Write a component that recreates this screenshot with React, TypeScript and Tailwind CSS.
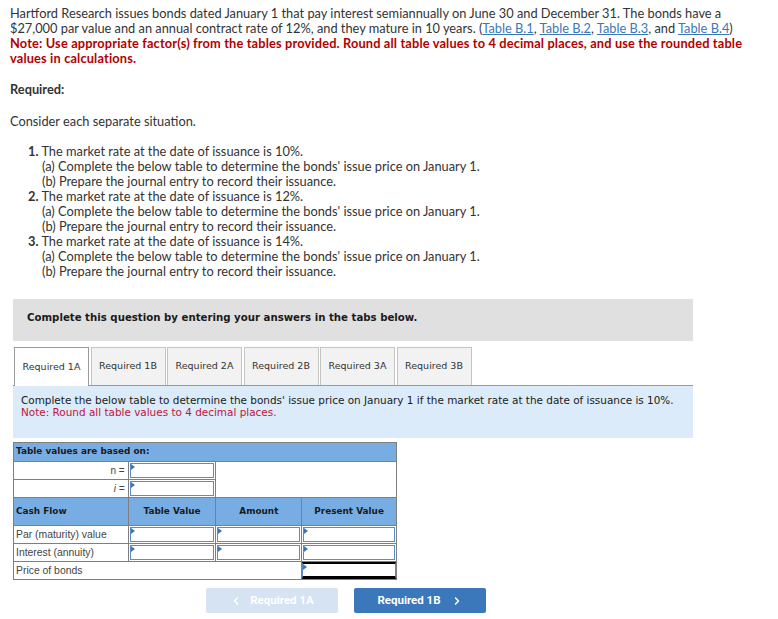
import React from 'react';
import { ChevronLeft, ChevronRight } from 'lucide-react';

const situations = ['10%', '12%', '14%'];
const tabs = ['Required 1A', 'Required 1B', 'Required 2A', 'Required 2B', 'Required 3A', 'Required 3B'];

const Field = ({ thick = false }: { thick?: boolean }) => (
  <div
    className={`relative h-full bg-white border border-[#5a8ccb] ${thick ? 'border-t-2 border-b-[3px] border-t-black border-b-black' : ''}`}
  >
    <span className="absolute left-0 top-0 w-0 h-0 border-t-[3px] border-b-[3px] border-l-[4px] border-t-transparent border-b-transparent border-l-[#3a77bb]" />
  </div>
);

const label = { fontFamily: '"Liberation Sans", Arial, sans-serif' };

const App = () => {
  return (
    <div className="w-[778px] h-[619px] bg-white overflow-hidden text-[#333]" style={{ fontFamily: 'Lato, "Open Sans", sans-serif' }}>
      <div className="pl-[10px] pt-[6px] text-[12.8px] leading-[15px] whitespace-nowrap">
        <p>
          Hartford Research issues bonds dated January 1 that pay interest semiannually on June 30 and December 31. The bonds have a
          <br />
          $27,000 par value and an annual contract rate of 12%, and they mature in 10 years. (
          <a className="text-[#3a77bb] underline">Table B.1</a>, <a className="text-[#3a77bb] underline">Table B.2</a>,{' '}
          <a className="text-[#3a77bb] underline">Table B.3</a>, and <a className="text-[#3a77bb] underline">Table B.4</a>)
        </p>
        <p className="font-bold text-[#b30000] tracking-[0.15px]">
          Note: Use appropriate factor(s) from the tables provided. Round all table values to 4 decimal places, and use the rounded table
          <br />
          values in calculations.
        </p>
        <p className="font-bold mt-[16px]">Required:</p>
        <p className="mt-[17px]">Consider each separate situation.</p>
        <div className="mt-[15px] pl-[18px]">
          {situations.map((rate, i) => (
            <div key={rate}>
              <p>
                <span className="font-bold">{i + 1}.</span> The market rate at the date of issuance is {rate}.
              </p>
              <p className="pl-[14px]">(a) Complete the below table to determine the bonds&apos; issue price on January 1.</p>
              <p className="pl-[14px]">(b) Prepare the journal entry to record their issuance.</p>
            </div>
          ))}
        </div>
      </div>

      <div className="ml-[13px] w-[680px] mt-[20px]" style={{ fontFamily: '"DejaVu Sans", Verdana, sans-serif' }}>
        <div className="h-[42px] bg-[#e0e0e0] pl-[14px] pt-[11px] text-[10.2px] font-bold text-[#1a1a1a]">
          Complete this question by entering your answers in the tabs below.
        </div>

        <div className="mt-[6px] flex items-end gap-[1.5px] pl-px border-b border-[#999]">
          {tabs.map((tab, i) => (
            <div
              key={tab}
              className={`w-[75px] flex items-center justify-center text-[9.5px] border border-b-0 ${
                i === 0 ? 'bg-white border-[#999] -mb-px h-[39px]' : 'bg-[#f2f2f2] border-[#c4c4c4] h-[38px]'
              }`}
            >
              {tab}
            </div>
          ))}
        </div>

        <div className="h-[52px] bg-[#dbebf9] pl-[8px] pt-[8px] text-[10.45px] leading-[12px] text-[#1a1a1a]">
          <p>Complete the below table to determine the bonds&apos; issue price on January 1 if the market rate at the date of issuance is 10%.</p>
          <p className="text-[#c0143c]">Note: Round all table values to 4 decimal places.</p>
        </div>

        <table className="mt-[4px] border-collapse text-[8.9px] text-[#1a1a1a] w-[384px]">
          <colgroup>
            <col className="w-[115px]" />
            <col className="w-[88px]" />
            <col className="w-[86px]" />
            <col className="w-[95px]" />
          </colgroup>
          <tbody>
            <tr className="h-[19px]">
              <td colSpan={4} className="bg-[#78ade3] border border-[#7f7f7f] px-[2px] font-bold">Table values are based on:</td>
            </tr>
            <tr className="h-[18px]">
              <td className="border border-[#7f7f7f] text-right pr-[3px] text-[#444] text-[10px]" style={label}>n =</td>
              <td className="border border-[#7f7f7f] p-px h-[18px]"><Field /></td>
              <td colSpan={2} rowSpan={2} className="border border-[#7f7f7f] bg-white" />
            </tr>
            <tr className="h-[18px]">
              <td className="border border-[#7f7f7f] text-right pr-[3px] italic text-[#444] text-[10px]" style={label}>i =</td>
              <td className="border border-[#7f7f7f] p-px h-[18px]"><Field /></td>
            </tr>
            <tr className="h-[28px] bg-[#78ade3] font-bold">
              <td className="border border-[#7f7f7f] px-[2px]">Cash Flow</td>
              <td className="border border-[#7f7f7f] text-center">Table Value</td>
              <td className="border border-[#7f7f7f] text-center">Amount</td>
              <td className="border border-[#7f7f7f] text-center">Present Value</td>
            </tr>
            {['Par (maturity) value', 'Interest (annuity)'].map((row) => (
              <tr key={row} className="h-[18px]">
                <td className="border border-[#7f7f7f] px-[2px] text-[#444] text-[10.4px]" style={label}>{row}</td>
                <td className="border border-[#7f7f7f] p-px h-[18px]"><Field /></td>
                <td className="border border-[#7f7f7f] p-px h-[18px]"><Field /></td>
                <td className="border border-[#7f7f7f] p-px h-[18px]"><Field /></td>
              </tr>
            ))}
            <tr className="h-[18px]">
              <td colSpan={3} className="border border-[#7f7f7f] px-[2px] text-[#444] text-[10.4px]" style={label}>Price of bonds</td>
              <td className="border border-[#7f7f7f] p-0 h-[18px]"><Field thick /></td>
            </tr>
          </tbody>
        </table>

        <div className="mt-[8px] flex justify-center gap-[16px] pr-[14px]" style={{ fontFamily: 'Roboto, "Liberation Sans", sans-serif' }}>
          <button className="w-[132px] h-[25px] rounded-[2px] bg-[#d6e3f2] text-white text-[11.5px] font-bold flex items-center justify-center gap-[8px]">
            <ChevronLeft className="w-[12px] h-[12px]" strokeWidth={3} />
            <span>Required 1A</span>
          </button>
          <button className="w-[132px] h-[25px] rounded-[2px] bg-[#3a77bb] text-white text-[11.5px] font-bold flex items-center justify-center gap-[10px]">
            <span>Required 1B</span>
            <ChevronRight className="w-[12px] h-[12px]" strokeWidth={3} />
          </button>
        </div>
      </div>
    </div>
  );
};

export default App;
